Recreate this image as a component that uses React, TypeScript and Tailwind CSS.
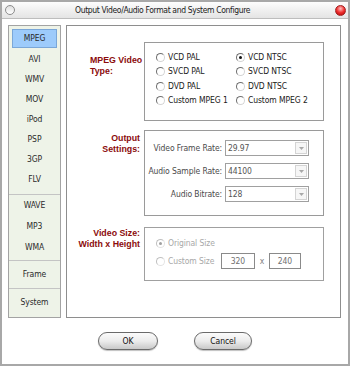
import React from "react";

const formats = ["MPEG", "AVI", "WMV", "MOV", "iPod", "PSP", "3GP", "FLV"];
const audio = ["WAVE", "MP3", "WMA"];

const Radio = ({ checked, disabled }: { checked?: boolean; disabled?: boolean }) => (
  <span
    className={`w-[9px] h-[9px] rounded-full border bg-white flex items-center justify-center shrink-0 ${
      disabled ? "border-[#c0c0c0] border-r-[#e4e4e4] border-b-[#e4e4e4]" : "border-[#707070] border-r-[#d4d4d4] border-b-[#d4d4d4]"
    }`}
  >
    {checked && <span className={`w-[3px] h-[3px] rounded-full ${disabled ? "bg-[#a0a0a0]" : "bg-[#111111]"}`} />}
  </span>
);

const RadioOpt = ({ label, checked, disabled, className }: { label: string; checked?: boolean; disabled?: boolean; className?: string }) => (
  <div className={`flex items-center gap-[3px] ${className || ""}`}>
    <Radio checked={checked} disabled={disabled} />
    <span className={disabled ? "text-[#a8a8a8]" : "text-[#1a1a1a]"}>{label}</span>
  </div>
);

const Combo = ({ value }: { value: string }) => (
  <div className="w-[84px] h-[16px] border border-[#a0a0a0] bg-white flex items-center">
    <span className="flex-1 pl-[2px] text-[#555555]">{value}</span>
    <span className="w-[12px] h-[12px] mr-[1px] border border-[#d4d4d4] bg-[#f6f6f6] flex items-center justify-center">
      <svg width="5" height="3" viewBox="0 0 5 3">
        <path d="M0 0h5L2.5 3z" fill="#a8a8a8" />
      </svg>
    </span>
  </div>
);

const SizeBox = ({ value, w }: { value: string; w: string }) => (
  <div className={`${w} h-[16px] border border-[#8a8a8a] bg-white flex items-center justify-center text-[#707070]`}>
    {value}
  </div>
);

const GroupLabel = ({ lines, className }: { lines: string[]; className?: string }) => (
  <div className={`w-[73px] shrink-0 whitespace-nowrap font-[family-name:'Liberation_Sans',sans-serif] font-bold text-[8.8px] leading-[11px] tracking-normal text-[#8b0c0c] ${className || ""}`}>
    {lines.map((l) => (
      <div key={l}>{l}</div>
    ))}
  </div>
);

export default function App() {
  return (
    <div className="w-[350px] h-[366px] bg-white border-2 border-[#a8a8a8] flex flex-col font-[family-name:'DejaVu_Sans_Condensed','Liberation_Sans',sans-serif] text-[8.5px] leading-[11px] tracking-[-0.1px] text-[#222222] overflow-hidden">
      {/* title bar */}
      <div className="h-[17px] shrink-0 flex items-center border-b border-[#bdbdbd] bg-gradient-to-b from-[#fdfdfd] to-[#e4e4e4]">
        <span className="ml-[3px] w-[10px] h-[10px] rounded-full border border-[#8c8c8c] bg-gradient-to-b from-[#e0e0e0] to-white" />
        <span className="ml-[60px] flex-1 tracking-[-0.35px] text-[#202020]">Output Video/Audio Format and System Configure</span>
        <span className="mr-[2px] w-[11px] h-[11px] rounded-full border border-[#a02020] bg-[radial-gradient(circle_at_50%_30%,#ffc0c0,#f03030_50%,#b00000)]" />
      </div>

      {/* body */}
      <div className="flex gap-[5px] pl-[6px] pt-[6px]">
        <div className="w-[53px] h-[293px] border border-[#a3a3a3] bg-[#eef3e8] flex flex-col text-center text-[#2a2a2a]">
          <div className="pt-[3px] px-[3px] pb-[5px] border-b border-[#c4c4c4]">
            {formats.map((f, i) => (
              <div
                key={f}
                className={
                  i === 0
                    ? "h-[19px] mb-[1px] flex items-center justify-center bg-[#9dcbfb] border border-[#7aa7d8]"
                    : "h-[20px] flex items-center justify-center"
                }
              >
                {f}
              </div>
            ))}
          </div>
          <div className="pb-[2px] border-b border-[#c4c4c4]">
            {audio.map((a) => (
              <div key={a} className="h-[21px] flex items-center justify-center">
                {a}
              </div>
            ))}
          </div>
          <div className="h-[28px] flex items-center justify-center border-b border-[#c4c4c4]">Frame</div>
          <div className="flex-1 flex items-center justify-center pb-[2px]">System</div>
        </div>

        <div className="w-[275px] h-[293px] border border-[#8e8e8e] flex flex-col">
          {/* MPEG video type */}
          <div className="flex gap-[4px] mt-[16px]">
            <GroupLabel lines={["MPEG Video", "Type:"]} className="pl-[23px] pt-[13px]" />
            <div className="w-[180px] h-[79px] border border-[#9a9a9a] pt-[7px] pl-[11px] grid grid-cols-[80px_1fr] auto-rows-[14.5px]">
              <RadioOpt label="VCD PAL" />
              <RadioOpt label="VCD NTSC" checked />
              <RadioOpt label="SVCD PAL" />
              <RadioOpt label="SVCD NTSC" />
              <RadioOpt label="DVD PAL" />
              <RadioOpt label="DVD NTSC" />
              <RadioOpt label="Custom MPEG 1" />
              <RadioOpt label="Custom MPEG 2" />
            </div>
          </div>

          {/* output settings */}
          <div className="flex gap-[4px] mt-[9px]">
            <GroupLabel lines={["Output", "Settings:"]} className="text-right pt-[3px]" />
            <div className="w-[180px] h-[86px] border border-[#9a9a9a] pt-[9px] pr-[14px] flex flex-col gap-[7px] text-[#4a4a4a]">
              {[
                ["Video Frame Rate:", "29.97"],
                ["Audio Sample Rate:", "44100"],
                ["Audio Bitrate:", "128"],
              ].map(([l, v]) => (
                <div key={l} className="flex items-center justify-end gap-[3px]">
                  <span>{l}</span>
                  <Combo value={v} />
                </div>
              ))}
            </div>
          </div>

          {/* video size */}
          <div className="flex gap-[4px] mt-[11px]">
            <GroupLabel lines={["Video Size:", "Width x Height"]} className="text-right pt-[1px]" />
            <div className="w-[180px] h-[54px] border border-[#a0a0a0] pt-[8px] pl-[11px] flex flex-col gap-[3px]">
              <RadioOpt label="Original Size" checked disabled className="h-[14px]" />
              <div className="flex items-center h-[16px]">
                <RadioOpt label="Custom Size" disabled className="w-[65px]" />
                <SizeBox value="320" w="w-[34px]" />
                <span className="w-[14px] text-center text-[#808080]">x</span>
                <SizeBox value="240" w="w-[32px]" />
              </div>
            </div>
          </div>
        </div>
      </div>

      {/* buttons */}
      <div className="flex justify-center gap-[36px] mt-[14px]">
        <button className="w-[60px] h-[18px] rounded-full border border-[#6a6a6a] bg-gradient-to-b from-[#fbfbfb] via-[#ececec] to-[#c9c9c9] shadow-[0_1px_1px_rgba(0,0,0,0.25)] text-[#111111]">
          OK
        </button>
        <button className="w-[58px] h-[18px] rounded-full border border-[#6a6a6a] bg-gradient-to-b from-[#fbfbfb] via-[#ececec] to-[#c9c9c9] shadow-[0_1px_1px_rgba(0,0,0,0.25)] text-[#111111]">
          Cancel
        </button>
      </div>
    </div>
  );
}
